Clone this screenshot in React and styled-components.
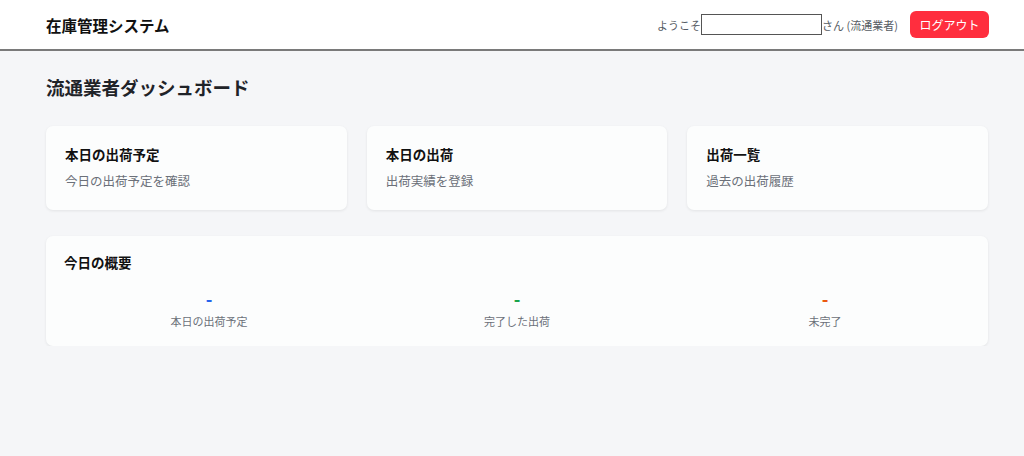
import React from 'react';
import styled, { createGlobalStyle } from 'styled-components';

const GlobalStyle = createGlobalStyle`
  * { box-sizing: border-box; }
  body {
    margin: 0;
    background: #f5f6f8;
    font-family: "Noto Sans CJK JP", "Noto Sans", "Liberation Sans", sans-serif;
    color: #1f2328;
  }
`;

const menus = [
  { title: '本日の出荷予定', desc: '今日の出荷予定を確認' },
  { title: '本日の出荷', desc: '出荷実績を登録' },
  { title: '出荷一覧', desc: '過去の出荷履歴' },
];

const stats = [
  { label: '本日の出荷予定', color: '#2563eb' },
  { label: '完了した出荷', color: '#16a34a' },
  { label: '未完了', color: '#ea580c' },
];

const App = () => {
  return (
    <>
      <GlobalStyle />
      <Header>
        <Brand>在庫管理システム</Brand>
        <UserArea>
          <span>ようこそ</span>
          <NameBox type="text" />
          <span>さん (流通業者)</span>
          <LogoutButton>ログアウト</LogoutButton>
        </UserArea>
      </Header>
      <Main>
        <PageTitle>流通業者ダッシュボード</PageTitle>
        <MenuGrid>
          {menus.map(m => (
            <MenuCard key={m.title}>
              <CardTitle>{m.title}</CardTitle>
              <CardDesc>{m.desc}</CardDesc>
            </MenuCard>
          ))}
        </MenuGrid>
        <SummaryCard>
          <CardTitle>今日の概要</CardTitle>
          <StatGrid>
            {stats.map(s => (
              <Stat key={s.label}>
                <StatValue color={s.color}>-</StatValue>
                <StatLabel>{s.label}</StatLabel>
              </Stat>
            ))}
          </StatGrid>
        </SummaryCard>
      </Main>
    </>
  );
};
export default App;

const Header = styled.header`
  height: 51px;
  background: #ffffff;
  border-bottom: 2px solid #7a7a7a;
  display: flex;
  align-items: center;
  justify-content: space-between;
  padding: 0 35px 0 46px;
`;

const Brand = styled.h1`
  margin: 0;
  font-size: 15.5px;
  font-weight: 700;
  color: #111;
`;

const UserArea = styled.div`
  display: flex;
  align-items: center;
  font-size: 11px;
  color: #555b63;
`;

const NameBox = styled.input`
  width: 121px;
  height: 21px;
  border: 1px solid #555;
  border-radius: 0;
  padding: 0 4px;
  margin: 0;
  background: #fff;
`;

const LogoutButton = styled.button`
  margin-left: 12px;
  height: 27px;
  width: 79px;
  border: none;
  border-radius: 6px;
  background: #ff2e3e;
  color: #fff;
  font-family: inherit;
  font-size: 12px;
  cursor: pointer;
`;

const Main = styled.main`
  padding: 23px 36px 0 46px;
`;

const PageTitle = styled.h2`
  margin: 0 0 26px;
  font-size: 18.5px;
  font-weight: 700;
  color: #1f2328;
`;

const MenuGrid = styled.div`
  display: grid;
  grid-template-columns: repeat(3, 1fr);
  gap: 20px;
  margin-bottom: 26px;
`;

const Panel = styled.div`
  background: #fcfdfd;
  border-radius: 7px;
  box-shadow: 0 1px 3px rgba(0, 0, 0, 0.08);
`;

const MenuCard = styled(Panel)`
  height: 84px;
  padding: 18px 19px;
`;

const CardTitle = styled.h3`
  margin: 0;
  font-size: 13.5px;
  font-weight: 700;
  color: #111;
`;

const CardDesc = styled.p`
  margin: 7px 0 0;
  font-size: 12.5px;
  color: #6b7079;
`;

const SummaryCard = styled(Panel)`
  padding: 16px 18px 17px;
`;

const StatGrid = styled.div`
  display: grid;
  grid-template-columns: repeat(3, 1fr);
  gap: 18px;
  margin-top: 14px;
`;

const Stat = styled.div`
  display: flex;
  flex-direction: column;
  align-items: center;
`;

const StatValue = styled.div`
  font-size: 18px;
  font-weight: 700;
  line-height: 24px;
  color: ${p => p.color};
`;

const StatLabel = styled.div`
  font-size: 11px;
  color: #6b7079;
  margin-top: 3px;
`;
